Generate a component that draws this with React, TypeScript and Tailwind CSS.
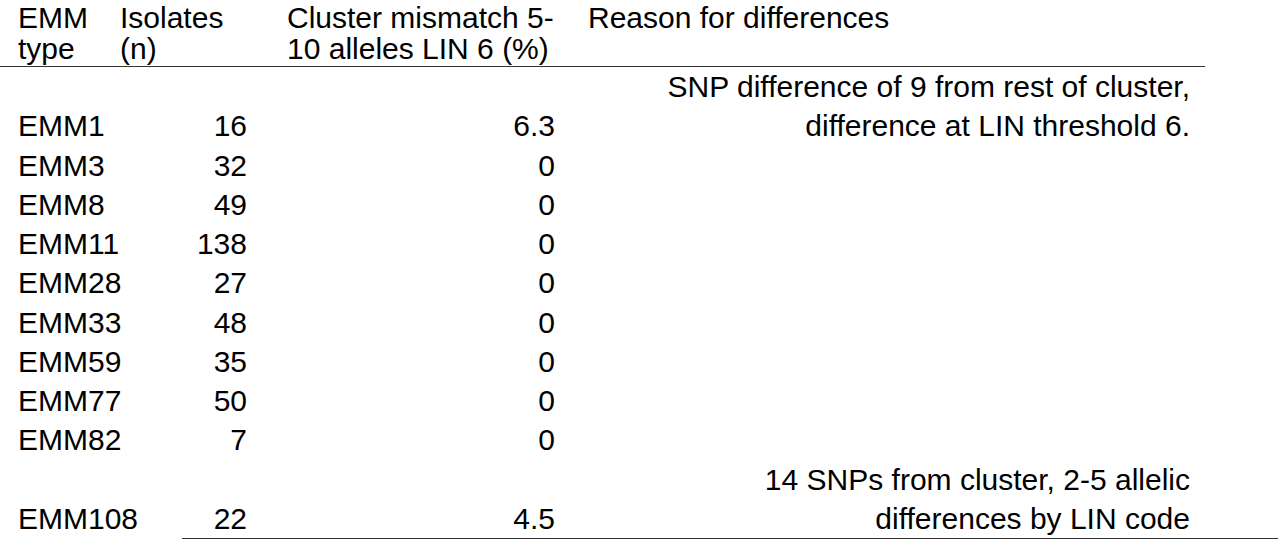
const rows: { type: string; n: string; pct: string; reason?: string[] }[] = [
  { type: "EMM1", n: "16", pct: "6.3", reason: ["SNP difference of 9 from rest of cluster,", "difference at LIN threshold 6."] },
  { type: "EMM3", n: "32", pct: "0" },
  { type: "EMM8", n: "49", pct: "0" },
  { type: "EMM11", n: "138", pct: "0" },
  { type: "EMM28", n: "27", pct: "0" },
  { type: "EMM33", n: "48", pct: "0" },
  { type: "EMM59", n: "35", pct: "0" },
  { type: "EMM77", n: "50", pct: "0" },
  { type: "EMM82", n: "7", pct: "0" },
  { type: "EMM108", n: "22", pct: "4.5", reason: ["14 SNPs from cluster, 2-5 allelic", "differences by LIN code"] },
];

function HeaderCell({ lines, className }: { lines: string[]; className: string }) {
  return (
    <div className={className}>
      {lines.map((l) => (
        <div key={l} className="whitespace-nowrap">
          {l}
        </div>
      ))}
    </div>
  );
}

export default function App() {
  return (
    <div className="w-[1280px] h-[541px] bg-white text-black font-['Liberation_Sans',Arial,sans-serif] text-[30px] overflow-hidden">
      <div className="w-[1205px]">
        {/* header */}
        <div className="flex leading-[31px] pt-[2px] pb-[2px] border-b border-[#333]">
          <HeaderCell lines={["EMM", "type"]} className="w-[120px] pl-[18px]" />
          <HeaderCell lines={["Isolates", "(n)"]} className="w-[167px]" />
          <HeaderCell lines={["Cluster mismatch 5-", "10 alleles LIN 6 (%)"]} className="w-[298px]" />
          <HeaderCell lines={["Reason for differences"]} className="flex-1 pl-[3px]" />
        </div>

        {/* body */}
        <div className="leading-[39.25px]">
          {rows.map((r) => (
            <div key={r.type} className="flex items-end">
              <div className="w-[120px] pl-[18px] whitespace-nowrap">{r.type}</div>
              <div className="w-[167px] pr-[40px] text-right">{r.n}</div>
              <div className="w-[298px] pr-[30px] text-right">{r.pct}</div>
              <div className="flex-1 pr-[15px] text-right">
                {r.reason?.map((l) => (
                  <div key={l} className="whitespace-nowrap">
                    {l}
                  </div>
                ))}
              </div>
            </div>
          ))}
        </div>
      </div>
      <div className="ml-[182px] w-[1096px] h-px bg-[#333]" />
    </div>
  );
}
